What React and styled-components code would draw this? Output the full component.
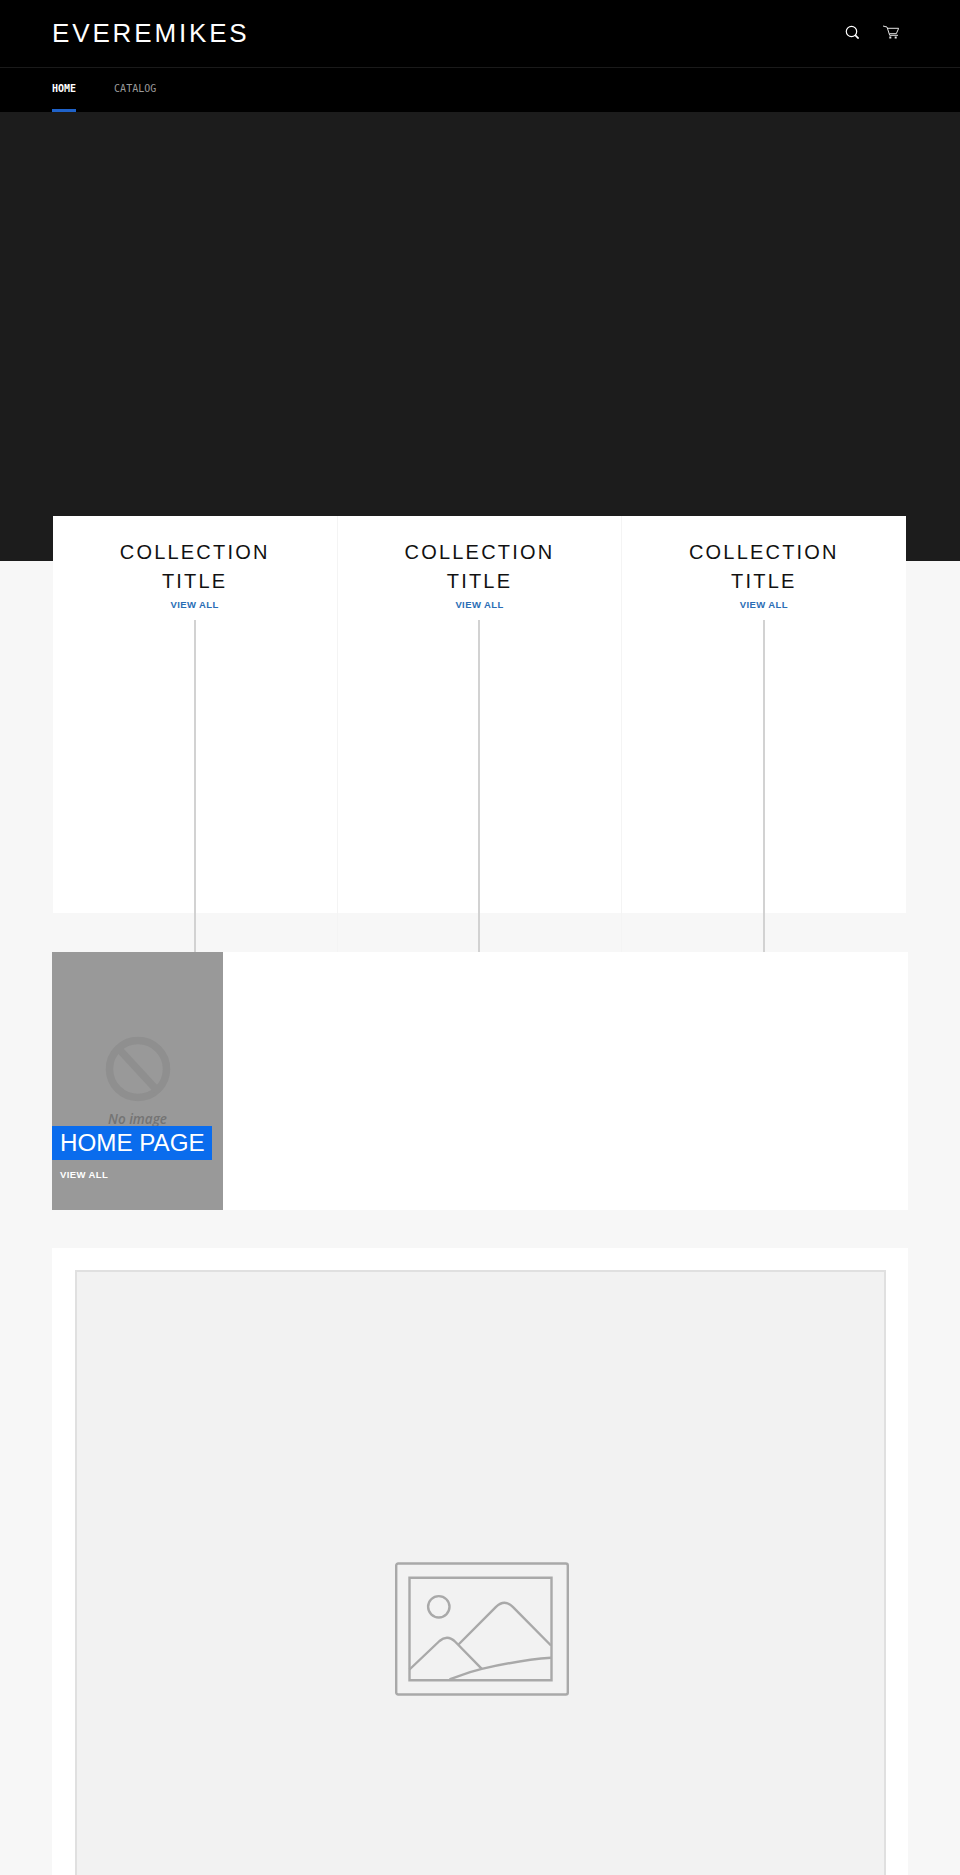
import React from "react";
import styled, { createGlobalStyle } from "styled-components";

const Global = createGlobalStyle`
  html, body {
    margin: 0;
    height: 1875px;
    overflow: hidden;
    background: #f7f7f7;
    font-family: "Liberation Sans", Arial, sans-serif;
  }
`;

const Header = styled.header`
  background: #000;
`;

const Masthead = styled.div`
  height: 67px;
  padding: 0 52px;
  display: flex;
  align-items: center;
  justify-content: space-between;
  border-bottom: 1px solid #1a1a1a;
`;

const Logo = styled.div`
  color: #fff;
  font-size: 26px;
  letter-spacing: 2.85px;
  line-height: 1;
  margin-top: -2px;
`;

const Icons = styled.div`
  display: flex;
  align-items: center;
  gap: 24px;
  margin-right: 9px;
  margin-top: -3px;
`;

const Nav = styled.nav`
  height: 44px;
  padding: 0 52px;
  display: flex;
  gap: 38px;
`;

const NavItem = styled.a`
  display: flex;
  align-items: center;
  height: 44px;
  box-sizing: border-box;
  font-family: "DejaVu Sans Mono", monospace;
  font-size: 10px;
  font-weight: ${p => (p.$active ? 700 : 400)};
  color: ${p => (p.$active ? "#fff" : "#9a9a9a")};
  border-bottom: 3px solid ${p => (p.$active ? "#1f62c9" : "transparent")};
`;

const Hero = styled.div`
  height: 449px;
  background: #1c1c1c;
`;

const Main = styled.main`
  padding: 0 52px;
  margin-top: -45px;
`;

const CollectionRow = styled.section`
  height: 397px;
  margin-left: 0.5px;
  width: 853px;
  background: #fff;
  display: grid;
  grid-template-columns: repeat(3, 1fr);
`;

const Collection = styled.div`
  display: flex;
  flex-direction: column;
  align-items: center;
  padding-top: 22px;
  border-left: ${p => (p.$first ? "none" : "1px solid #f4f4f4")};
`;

const CollectionTitle = styled.h2`
  margin: 0;
  width: 190px;
  text-align: center;
  font-size: 20px;
  font-weight: 400;
  line-height: 29px;
  letter-spacing: 2.2px;
  color: #111;
`;

const ViewAll = styled.a`
  display: block;
  font-size: 9.5px;
  font-weight: 700;
  letter-spacing: 0.4px;
  line-height: 12px;
  color: ${p => (p.$light ? "#fff" : "#2a6db5")};
`;

const CollectionLink = styled(ViewAll)`
  margin-top: 3px;
`;

const Rule = styled.div`
  width: 2px;
  height: 332px;
  margin-top: 9px;
  background: #d2d2d2;
  position: relative;
`;

const FeatureRow = styled.section`
  margin-top: 39px;
  width: 856px;
  height: 258px;
  background: #fff;
`;

const Tile = styled.div`
  position: relative;
  width: 171px;
  height: 258px;
  background: #999;
  display: flex;
  flex-direction: column;
  align-items: center;
  padding-top: 84px;
  box-sizing: border-box;
`;

const NoImage = styled.div`
  font-family: "Open Sans", sans-serif;
  font-style: italic;
  font-weight: 600;
  font-size: 13.5px;
  line-height: 14px;
  color: #747474;
  margin-top: 10px;
`;

const TileCaption = styled.div`
  position: absolute;
  left: 0;
  top: 174px;
`;

const TileTitle = styled.div`
  background: #0a6ced;
  color: #fff;
  width: 160px;
  height: 34px;
  box-sizing: border-box;
  padding-left: 8px;
  font-size: 24.2px;
  line-height: 33px;
  white-space: nowrap;
`;

const TileLink = styled(ViewAll)`
  margin: 9px 0 0 8px;
`;

const ImageCard = styled.section`
  margin-top: 38px;
  width: 856px;
  padding: 22px 22px 22px 23px;
  box-sizing: border-box;
  background: #fff;
`;

const Placeholder = styled.div`
  height: 718px;
  box-sizing: border-box;
  background: #f2f2f2;
  border: 2px solid #e0e0e0;
  display: flex;
  align-items: center;
  justify-content: center;
`;

const PictureSvg = styled.svg`
  margin-left: 3px;
`;

const SearchIcon = () => (
  <svg width="14" height="14" viewBox="0 0 14 14" fill="none" stroke="#fff">
    <circle cx="6.5" cy="6.5" r="5.2" strokeWidth="1.2" />
    <path d="M10.2 10.2L13.6 13.6" strokeWidth="1.7" />
  </svg>
);

const CartIcon = () => (
  <svg width="16" height="14" viewBox="0 0 16 14" fill="none" stroke="#e4e4e4" strokeWidth="1">
    <path d="M0 1l4 1 2.700 8.300H15" />
    <path d="M5 3.300h10.700L13.300 8.700H6.500" />
    <rect x="6.300" y="11.500" width="2" height="2" fill="#e4e4e4" stroke="none" />
    <rect x="11.700" y="11.500" width="2" height="2" fill="#e4e4e4" stroke="none" />
  </svg>
);

const BlockedIcon = () => (
  <svg width="66" height="66" viewBox="0 0 66 66" fill="none" stroke="#8f8f8f" strokeWidth="7.500">
    <circle cx="33" cy="33" r="28.500" />
    <path d="M13 12L51.700 54" />
  </svg>
);

const PictureIcon = () => (
  <PictureSvg width="174" height="134" viewBox="0 0 174 134" fill="none" stroke="#a9a9a9" strokeWidth="2.400" strokeLinejoin="round">
    <rect x="1.200" y="1.500" width="171.600" height="131" rx="2" />
    <path d="M14.500 15.800H156.500V118.200H14.500z" strokeLinejoin="miter" />
    <circle cx="43.800" cy="44.800" r="10.700" />
    <path d="M14.500 107.500L44.500 79c2.500-2.200 5-3.200 7.500-3.200s5.500 1.200 8.500 4.200L86.800 106.800" />
    <path d="M63.500 82.500L101 44.800c3-2.700 5.800-4 8.500-4s5.500 1.300 8.300 4L156 83.500" />
    <path d="M54.500 117.500C64 114 75 109.500 86.800 106.800 108 102 132 97.500 156 95.800" />
  </PictureSvg>
);

const collections = [1, 2, 3];

export default function App() {
  return (
    <>
      <Global />
      <Header>
        <Masthead>
          <Logo>EVEREMIKES</Logo>
          <Icons>
            <SearchIcon />
            <CartIcon />
          </Icons>
        </Masthead>
        <Nav>
          <NavItem $active>HOME</NavItem>
          <NavItem>CATALOG</NavItem>
        </Nav>
      </Header>
      <Hero />
      <Main>
        <CollectionRow>
          {collections.map(n => (
            <Collection key={n} $first={n === 1}>
              <CollectionTitle>COLLECTION TITLE</CollectionTitle>
              <CollectionLink>VIEW ALL</CollectionLink>
              <Rule />
            </Collection>
          ))}
        </CollectionRow>
        <FeatureRow>
          <Tile>
            <BlockedIcon />
            <NoImage>No image</NoImage>
            <TileCaption>
              <TileTitle>HOME PAGE</TileTitle>
              <TileLink $light>VIEW ALL</TileLink>
            </TileCaption>
          </Tile>
        </FeatureRow>
        <ImageCard>
          <Placeholder>
            <PictureIcon />
          </Placeholder>
        </ImageCard>
      </Main>
    </>
  );
}
